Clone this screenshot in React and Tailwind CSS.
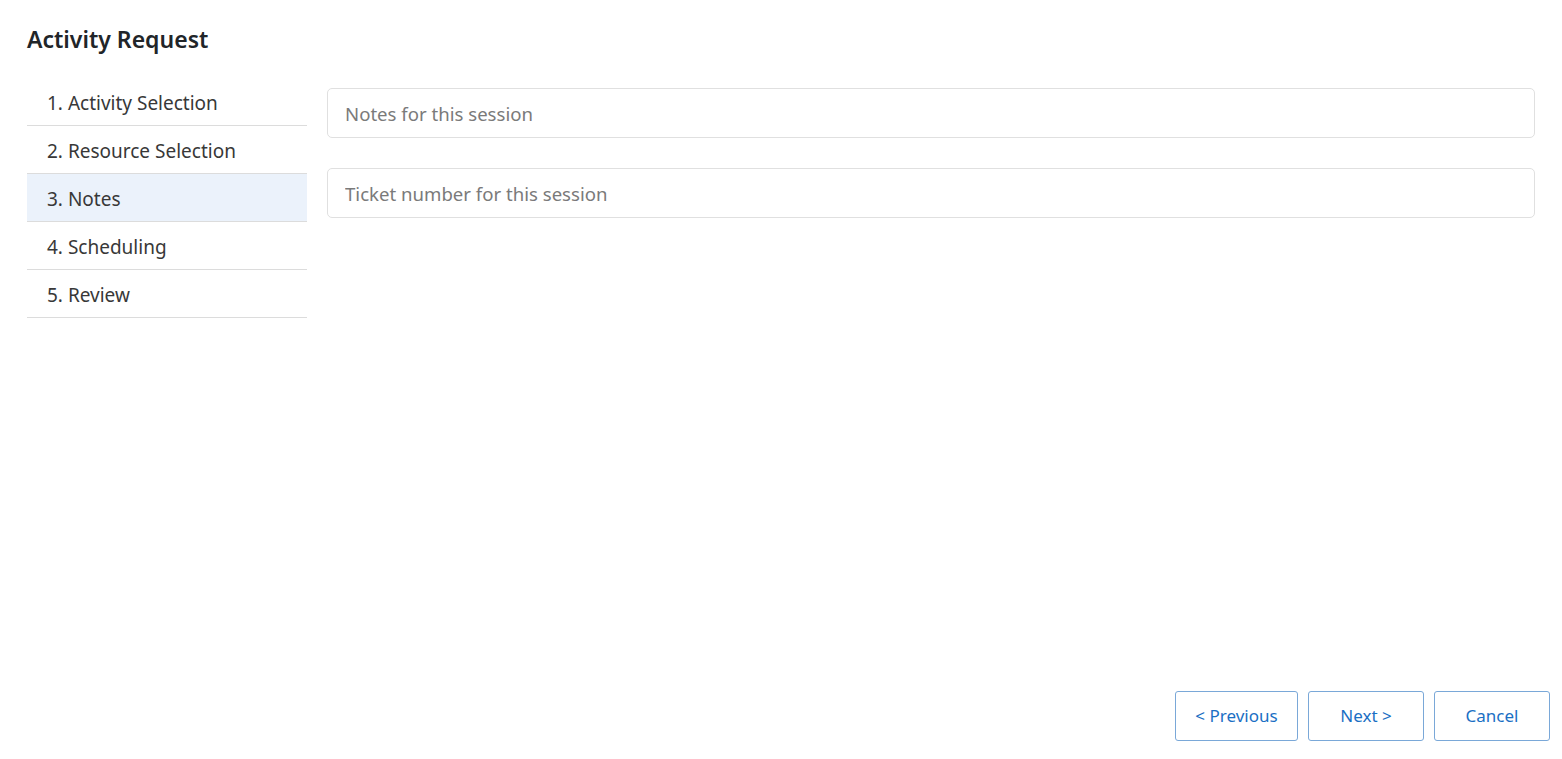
export default function App() {
  const steps = ["1. Activity Selection", "2. Resource Selection", "3. Notes", "4. Scheduling", "5. Review"];
  return (
    <div className="h-screen w-full bg-white flex flex-col text-[#383838]" style={{ fontFamily: '"Segoe UI", "Noto Sans", sans-serif' }}>
      <div className="pl-[27px] pr-[27px] pt-[21px] flex-1">
        <h1 className="text-[23px] font-semibold text-[#212529] leading-[36px]">Activity Request</h1>
        <div className="flex gap-[20px] mt-[21px]">
          <ul className="w-[280px] shrink-0">
            {steps.map((s, i) => (
              <li
                key={s}
                className={`h-[48px] flex items-center pl-[20px] pt-[3px] text-[19px] border-b border-[#dcdcdc] ${i === 2 ? "bg-[#ebf2fb]" : ""}`}
              >
                {s}
              </li>
            ))}
          </ul>
          <div className="flex-1 flex flex-col gap-[30px] pt-[10px]">
            <input
              className="h-[50px] w-full rounded-[5px] border border-[#e0e0e0] px-[17px] text-[18.6px] placeholder:text-[#7a7a7a] outline-none"
              placeholder="Notes for this session"
            />
            <input
              className="h-[50px] w-full rounded-[5px] border border-[#e0e0e0] px-[17px] text-[18.6px] placeholder:text-[#7a7a7a] outline-none"
              placeholder="Ticket number for this session"
            />
          </div>
        </div>
      </div>
      <div className="flex justify-end gap-[10px] pr-[12px] pb-[18px]">
        <button className="h-[50px] w-[123px] rounded-[3px] border border-[#7aa8d8] text-[#1a6fc4] text-[17px]">&lt; Previous</button>
        <button className="h-[50px] w-[116px] rounded-[3px] border border-[#7aa8d8] text-[#1a6fc4] text-[17px]">Next &gt;</button>
        <button className="h-[50px] w-[116px] rounded-[3px] border border-[#7aa8d8] text-[#1a6fc4] text-[17px]">Cancel</button>
      </div>
    </div>
  );
}
